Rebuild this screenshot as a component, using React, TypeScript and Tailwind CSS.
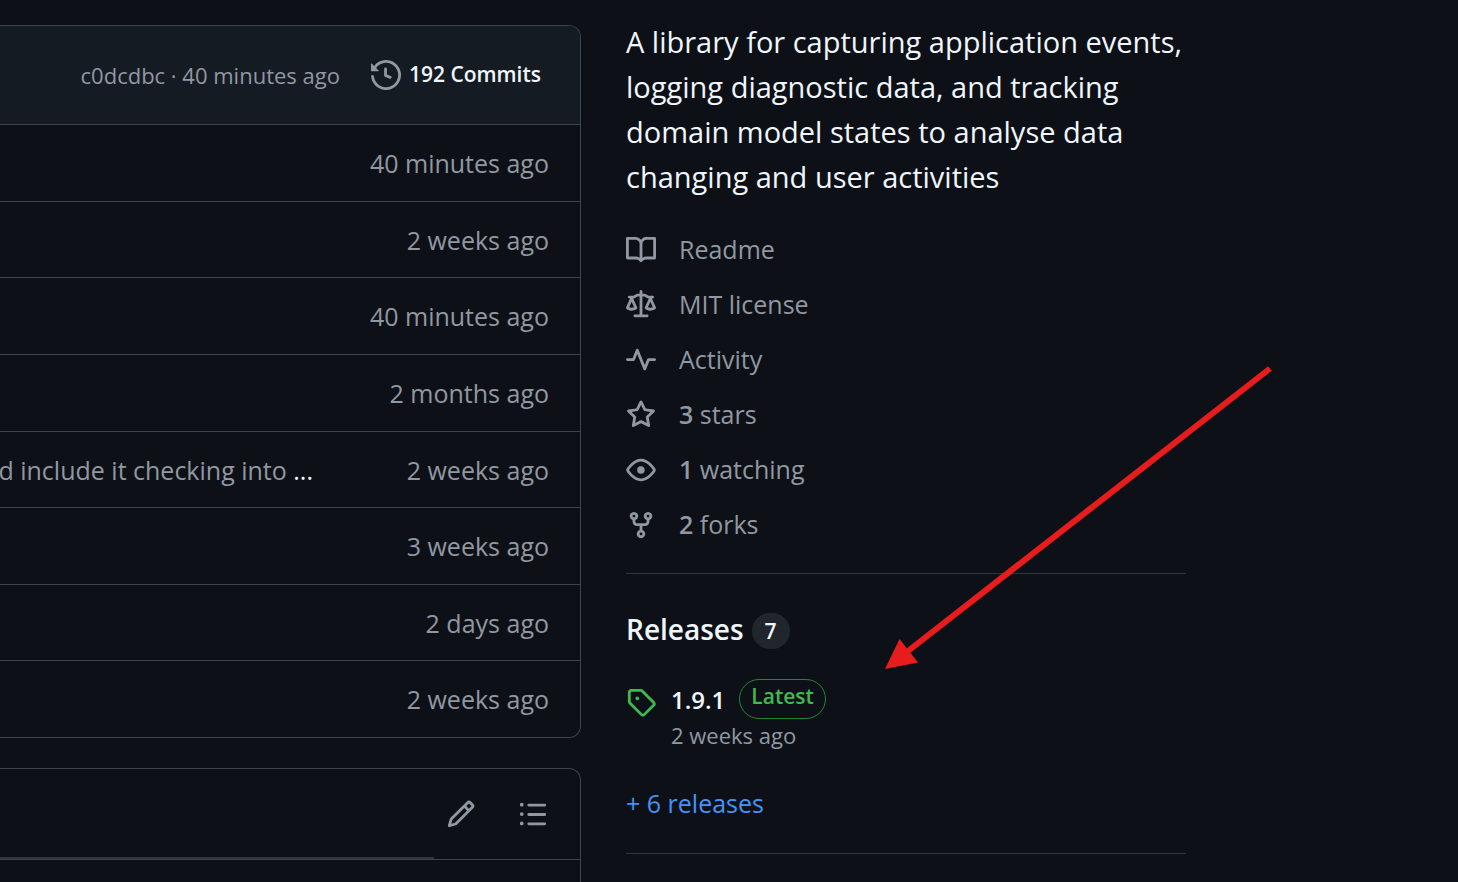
import type { ReactNode } from "react";

const ICONS = {
  history:
    "m.427 1.927 1.215 1.215a8.002 8.002 0 1 1-1.6 5.685.75.75 0 1 1 1.493-.154 6.5 6.5 0 1 0 1.18-4.458l1.358 1.358A.25.25 0 0 1 3.896 6H.25A.25.25 0 0 1 0 5.75V2.104a.25.25 0 0 1 .427-.177ZM7.75 4a.75.75 0 0 1 .75.75v2.992l2.028.812a.75.75 0 0 1-.557 1.392l-2.5-1A.751.751 0 0 1 7 8.25v-3.5A.75.75 0 0 1 7.75 4Z",
  book: "M0 1.75A.75.75 0 0 1 .75 1h4.253c1.227 0 2.317.59 3 1.501A3.743 3.743 0 0 1 11.006 1h4.245a.75.75 0 0 1 .75.75v10.5a.75.75 0 0 1-.75.75h-4.507a2.25 2.25 0 0 0-1.591.659l-.622.621a.75.75 0 0 1-1.06 0l-.622-.621A2.25 2.25 0 0 0 5.258 13H.75a.75.75 0 0 1-.75-.75Zm7.251 10.324.004-5.073-.002-2.253A2.25 2.25 0 0 0 5.003 2.5H1.5v9h3.757a3.75 3.75 0 0 1 1.994.574ZM8.755 4.75l-.004 7.322a3.752 3.752 0 0 1 1.992-.572H14.5v-9h-3.495a2.25 2.25 0 0 0-2.25 2.25Z",
  law: "M8.75.75V2h.985c.304 0 .603.08.867.231l1.29.736c.038.022.08.033.124.033h2.234a.75.75 0 0 1 0 1.5h-.427l2.111 4.692a.75.75 0 0 1-.154.838l-.53-.53.529.531-.001.002-.002.002-.006.006-.006.005-.01.01-.045.04c-.21.176-.441.327-.686.45C14.556 10.78 13.88 11 13 11a4.498 4.498 0 0 1-2.023-.454 3.544 3.544 0 0 1-.686-.45l-.045-.04-.016-.015-.006-.006-.004-.004v-.001a.75.75 0 0 1-.154-.838L12.178 4.5h-.162c-.305 0-.604-.079-.868-.231l-1.29-.736a.245.245 0 0 0-.124-.033H8.75V13h2.5a.75.75 0 0 1 0 1.5h-6.5a.75.75 0 0 1 0-1.5h2.5V3.5h-.984a.245.245 0 0 0-.124.033l-1.289.737c-.265.15-.564.23-.869.23h-.162l2.112 4.692a.75.75 0 0 1-.154.838l-.53-.53.529.531-.001.002-.002.002-.006.006-.016.015-.045.04c-.21.176-.441.327-.686.45C4.556 10.78 3.88 11 3 11a4.498 4.498 0 0 1-2.023-.454 3.544 3.544 0 0 1-.686-.45l-.045-.04-.016-.015-.006-.006-.004-.004v-.001a.75.75 0 0 1-.154-.838L2.178 4.5H1.75a.75.75 0 0 1 0-1.5h2.234a.249.249 0 0 0 .125-.033l1.288-.737c.265-.15.564-.23.869-.23h.984V.75a.75.75 0 0 1 1.5 0Zm2.945 8.477c.285.135.718.273 1.305.273s1.02-.138 1.305-.273L13 6.327Zm-10 0c.285.135.718.273 1.305.273s1.02-.138 1.305-.273L3 6.327Z",
  pulse:
    "M6 2c.306 0 .582.187.696.471L10 10.731l1.304-3.26A.751.751 0 0 1 12 7h3.25a.75.75 0 0 1 0 1.5h-2.742l-1.812 4.528a.751.751 0 0 1-1.392 0L6 4.77 4.696 8.03A.75.75 0 0 1 4 8.5H.75a.75.75 0 0 1 0-1.5h2.742l1.812-4.529A.751.751 0 0 1 6 2Z",
  star: "M8 .25a.75.75 0 0 1 .673.418l1.882 3.815 4.21.612a.75.75 0 0 1 .416 1.279l-3.046 2.97.719 4.192a.751.751 0 0 1-1.088.791L8 12.347l-3.766 1.98a.75.75 0 0 1-1.088-.79l.72-4.194L.818 6.374a.75.75 0 0 1 .416-1.28l4.21-.611L7.327.668A.75.75 0 0 1 8 .25Zm0 2.445L6.615 5.5a.75.75 0 0 1-.564.41l-3.097.45 2.24 2.184a.75.75 0 0 1 .216.664l-.528 3.084 2.769-1.456a.75.75 0 0 1 .698 0l2.77 1.456-.53-3.084a.75.75 0 0 1 .216-.664l2.24-2.183-3.096-.45a.75.75 0 0 1-.564-.41L8 2.694Z",
  eye: "M8 2c1.981 0 3.671.992 4.933 2.078 1.27 1.091 2.187 2.345 2.637 3.023a1.62 1.62 0 0 1 0 1.798c-.45.678-1.367 1.932-2.637 3.023C11.67 13.008 9.981 14 8 14c-1.981 0-3.671-.992-4.933-2.078C1.797 10.83.88 9.576.43 8.898a1.62 1.62 0 0 1 0-1.798c.45-.677 1.367-1.931 2.637-3.022C4.33 2.992 6.019 2 8 2ZM1.679 7.932a.12.12 0 0 0 0 .136c.411.622 1.241 1.75 2.366 2.717C5.176 11.758 6.527 12.5 8 12.5c1.473 0 2.825-.742 3.955-1.715 1.124-.967 1.954-2.096 2.366-2.717a.12.12 0 0 0 0-.136c-.412-.621-1.242-1.75-2.366-2.717C10.824 4.242 9.473 3.5 8 3.5c-1.473 0-2.825.742-3.955 1.715-1.124.967-1.954 2.096-2.366 2.717ZM8 10a2 2 0 1 1-.001-3.999A2 2 0 0 1 8 10Z",
  fork: "M5 5.372v.878c0 .414.336.75.75.75h4.5a.75.75 0 0 0 .75-.75v-.878a2.25 2.25 0 1 1 1.5 0v.878a2.25 2.25 0 0 1-2.25 2.25h-1.5v2.128a2.251 2.251 0 1 1-1.5 0V8.5h-1.5A2.25 2.25 0 0 1 3.5 6.25v-.878a2.25 2.25 0 1 1 1.5 0ZM5 3.25a.75.75 0 1 0-1.5 0 .75.75 0 0 0 1.5 0Zm6.75.75a.75.75 0 1 0 0-1.5.75.75 0 0 0 0 1.5Zm-3 8.75a.75.75 0 1 0-1.5 0 .75.75 0 0 0 1.5 0Z",
  tag: "M1 7.775V2.75C1 1.784 1.784 1 2.75 1h5.025c.464 0 .91.184 1.238.513l6.25 6.25a1.75 1.75 0 0 1 0 2.474l-5.026 5.026a1.75 1.75 0 0 1-2.474 0l-6.25-6.25A1.752 1.752 0 0 1 1 7.775Zm1.5 0c0 .066.026.13.073.177l6.25 6.25a.25.25 0 0 0 .354 0l5.025-5.025a.25.25 0 0 0 0-.354l-6.25-6.25a.25.25 0 0 0-.177-.073H2.75a.25.25 0 0 0-.25.25ZM6 5a1 1 0 1 1 0 2 1 1 0 0 1 0-2Z",
  pencil:
    "M11.013 1.427a1.75 1.75 0 0 1 2.474 0l1.086 1.086a1.75 1.75 0 0 1 0 2.474l-8.61 8.61c-.21.21-.47.364-.756.445l-3.251.93a.75.75 0 0 1-.927-.928l.929-3.25c.081-.286.235-.547.445-.758l8.61-8.61Zm.176 4.823L9.75 4.81l-6.286 6.287a.253.253 0 0 0-.064.108l-.558 1.953 1.953-.558a.253.253 0 0 0 .108-.064Zm1.238-3.763a.25.25 0 0 0-.354 0L10.811 3.75l1.439 1.44 1.263-1.263a.25.25 0 0 0 0-.354Z",
  list: "M5.75 2.5h8.5a.75.75 0 0 1 0 1.5h-8.5a.75.75 0 0 1 0-1.5Zm0 5h8.5a.75.75 0 0 1 0 1.5h-8.5a.75.75 0 0 1 0-1.5Zm0 5h8.5a.75.75 0 0 1 0 1.5h-8.5a.75.75 0 0 1 0-1.5ZM2 14a1 1 0 1 1 0-2 1 1 0 0 1 0 2Zm1-6a1 1 0 1 1-2 0 1 1 0 0 1 2 0ZM2 4a1 1 0 1 1 0-2 1 1 0 0 1 0 2Z",
};

type IconName = keyof typeof ICONS;

function Icon({ name }: { name: IconName }) {
  return (
    <svg viewBox="0 0 16 16" className="size-[30px] shrink-0 fill-current" aria-hidden="true">
      <path d={ICONS[name]} />
    </svg>
  );
}

const FILES: { message?: string; age: string }[] = [
  { age: "40 minutes ago" },
  { age: "2 weeks ago" },
  { age: "40 minutes ago" },
  { age: "2 months ago" },
  { message: "d include it checking into", age: "2 weeks ago" },
  { age: "3 weeks ago" },
  { age: "2 days ago" },
  { age: "2 weeks ago" },
];

function FileTable() {
  return (
    <section className="overflow-hidden rounded-tr-xl rounded-br-xl border border-l-0 border-[#3d444d]">
      <header className="flex h-[98px] items-center justify-end bg-[#151b23] pr-[39px]">
        <a href="#commit" className="text-[22px] text-[#9198a1]">
          c0dcdbc · 40 minutes ago
        </a>
        <a href="#commits" className="ml-[31px] flex items-center gap-2 text-[21px] font-semibold text-[#f0f6fc]">
          <span className="text-[#9198a1]">
            <Icon name="history" />
          </span>
          192 Commits
        </a>
      </header>
      <table className="h-[613px] w-full border-separate border-spacing-0 text-[25px] text-[#9198a1]">
        <tbody>
          {FILES.map((file, i) => (
            <tr key={i}>
              <td className="border-t border-[#3d444d] p-0 pt-0.5 whitespace-nowrap">
                {file.message && (
                  <a href="#message" className="flex w-[313px] justify-end overflow-hidden">
                    <span>
                      {file.message} <span className="text-[#f0f6fc]">...</span>
                    </span>
                  </a>
                )}
              </td>
              <td className="border-t border-[#3d444d] p-0 pt-0.5 pr-[31px] text-right whitespace-nowrap">
                {file.age}
              </td>
            </tr>
          ))}
        </tbody>
      </table>
    </section>
  );
}

function ReadmePanel() {
  return (
    <section className="mt-[30px] flex-1 rounded-tr-xl border border-b-0 border-l-0 border-[#3d444d]">
      <div className="flex h-[91px] items-stretch border-b border-[#3d444d] text-[#9198a1]">
        <div className="flex-1 border-b-2 border-[#2f353d]" />
        <button type="button" aria-label="Edit file" className="pr-[21px] pl-3">
          <Icon name="pencil" />
        </button>
        <button type="button" aria-label="Outline" className="mr-[11px] px-[21px]">
          <Icon name="list" />
        </button>
      </div>
    </section>
  );
}

function Meta({ icon, children }: { icon: IconName; children: ReactNode }) {
  return (
    <li>
      <a href="#meta" className="flex h-[55px] items-center gap-[23px]">
        <Icon name={icon} />
        <span>{children}</span>
      </a>
    </li>
  );
}

function About() {
  return (
    <aside className="w-[560px] shrink-0 pt-[19px]">
      <p className="text-[29px] leading-[45px] text-[#f0f6fc]">
        A library for capturing application events, logging diagnostic data, and tracking domain model states to analyse
        data changing and user activities
      </p>
      <ul className="mt-[23px] text-[25px] text-[#9198a1]">
        <Meta icon="book">Readme</Meta>
        <Meta icon="law">MIT license</Meta>
        <Meta icon="pulse">Activity</Meta>
        <Meta icon="star">
          <b className="font-semibold">3</b> stars
        </Meta>
        <Meta icon="eye">
          <b className="font-semibold">1</b> watching
        </Meta>
        <Meta icon="fork">
          <b className="font-semibold">2</b> forks
        </Meta>
      </ul>
      <section className="mt-[21px] border-y border-[#2f353d] pt-[37px] pb-8">
        <h2 className="flex items-start gap-2 text-[28px] leading-9 font-semibold text-[#f0f6fc]">
          <a href="#releases">Releases</a>
          <span className="mt-0.5 flex h-9 w-[38px] items-center justify-center rounded-full bg-[#21262d] text-[21px]">
            7
          </span>
        </h2>
        <div className="mt-[30px] flex gap-[15px]">
          <span className="pt-2 text-[#3fb950]">
            <Icon name="tag" />
          </span>
          <div>
            <div className="flex h-10 items-center gap-[14px]">
              <a href="#release" className="pt-0.5 text-[24px] font-semibold text-[#f0f6fc]">
                1.9.1
              </a>
              <span className="flex h-10 items-center rounded-full border border-[#238636] px-[11px] pb-1 text-[21px] font-semibold text-[#3fb950]">
                Latest
              </span>
            </div>
            <div className="text-[22px] leading-8 text-[#9198a1]">2 weeks ago</div>
          </div>
        </div>
        <a href="#all-releases" className="mt-[34px] block text-[25px] leading-9 text-[#4493f8]">
          + 6 releases
        </a>
      </section>
    </aside>
  );
}

function Arrow() {
  return (
    <svg
      viewBox="0 0 388 304"
      className="pointer-events-none absolute top-[366px] left-[885px] h-[304px] w-[388px]"
      aria-hidden="true"
    >
      <path d="M385 2.5 23 285" fill="none" stroke="#e81c1c" strokeWidth="6" />
      <path d="M0 303 14.500 273 33 296.500Z" fill="#e81c1c" />
    </svg>
  );
}

export default function App() {
  return (
    <div className="relative flex h-screen gap-[45px] overflow-hidden bg-[#0d1117] pr-[272px] font-['Open_Sans',sans-serif]">
      <main className="flex min-w-0 flex-1 flex-col pt-[25px]">
        <FileTable />
        <ReadmePanel />
      </main>
      <About />
      <Arrow />
    </div>
  );
}
